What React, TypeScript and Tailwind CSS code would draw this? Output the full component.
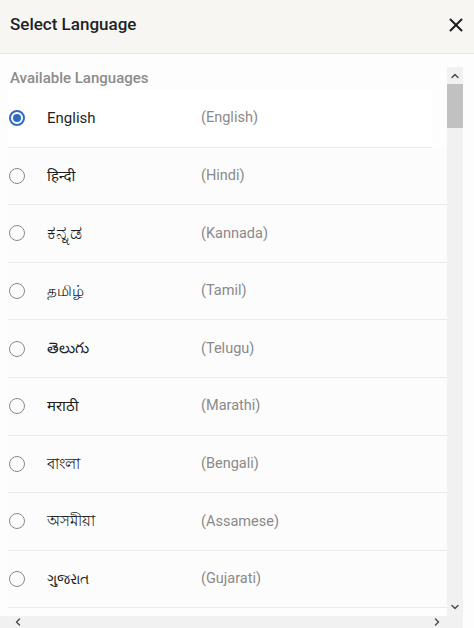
import { X, ChevronUp, ChevronDown, ChevronLeft, ChevronRight } from 'lucide-react';

const languages = [
  { native: 'English', name: 'English', size: 'text-[15px]' },
  { native: 'हिन्दी', name: 'Hindi', size: 'text-[15px]' },
  { native: 'ಕನ್ನಡ', name: 'Kannada', size: 'text-[19px]' },
  { native: 'தமிழ்', name: 'Tamil', size: 'text-[15px]' },
  { native: 'తెలుగు', name: 'Telugu', size: 'text-[15px]' },
  { native: 'मराठी', name: 'Marathi', size: 'text-[15px]' },
  { native: 'বাংলা', name: 'Bengali', size: 'text-[15px]' },
  { native: 'অসমীয়া', name: 'Assamese', size: 'text-[15px]' },
  { native: 'ગુજરાત', name: 'Gujarati', size: 'text-[14px]' },
];

function Radio({ checked }: { checked: boolean }) {
  if (checked) {
    return (
      <span className="w-4 h-4 shrink-0 rounded-full border-2 border-[#2f6cc0] flex items-center justify-center">
        <span className="w-2 h-2 rounded-full bg-[#2f6cc0]" />
      </span>
    );
  }
  return <span className="w-4 h-4 shrink-0 rounded-full border-[1.5px] border-[#8a8a8a]" />;
}

export default function App() {
  const selected = 'English';

  return (
    <div className="w-[474px] h-[628px] bg-[#fdfdfd] overflow-hidden flex flex-col font-['Roboto','Noto_Sans',sans-serif]">
      <div className="h-[54px] shrink-0 bg-[#f7f6f3] border-b border-[#e6e6e4] flex items-center justify-between pl-[10px] pr-[7px] pb-[4px]">
        <h1 className="text-[17px] font-medium text-[#1f1f1f]">Select Language</h1>
        <X size={22} strokeWidth={2.2} className="text-[#1f1f1f]" />
      </div>

      <div className="flex-1 flex flex-col min-h-0 pt-[12px]">
        <div className="flex-1 flex min-h-0">
          <div className="w-[447px] flex flex-col overflow-hidden">
            <div className="pl-[10px] h-[24px] text-[15px] font-medium text-[#8c8c8c] leading-[24px]">
              Available Languages
            </div>
            <div className="pl-[8px]">
              {languages.map((lang) => {
                const isSel = lang.native === selected;
                return (
                  <div
                    key={lang.name}
                    className={
                      'h-[57.6px] shrink-0 flex items-center pl-[1px] border-b border-[#ebebeb] ' +
                      (isSel ? 'bg-white mr-[15px]' : 'bg-[#fcfcfc]')
                    }
                  >
                    <Radio checked={isSel} />
                    <span className={'ml-[22px] w-[154px] text-[#1f1f1f] ' + lang.size}>{lang.native}</span>
                    <span className="text-[14.5px] text-[#8a8a8a]">({lang.name})</span>
                  </div>
                );
              })}
            </div>
          </div>
          <div className="w-[16px] mt-[1px] bg-[#f1f1f1] flex flex-col items-center">
            <ChevronUp size={12} strokeWidth={3} className="text-[#505050] mt-[3px]" />
            <div className="w-[16px] h-[44px] bg-[#c1c1c1] mt-[2px]" />
            <div className="flex-1" />
            <ChevronDown size={12} strokeWidth={3} className="text-[#505050] mb-[3px]" />
          </div>
        </div>
        <div className="h-[12px] shrink-0 w-[463px] bg-[#f1f1f1] flex items-center justify-between pl-[12px] pr-[20px]">
          <ChevronLeft size={12} strokeWidth={3} className="text-[#505050]" />
          <ChevronRight size={12} strokeWidth={3} className="text-[#505050]" />
        </div>
      </div>
    </div>
  );
}
